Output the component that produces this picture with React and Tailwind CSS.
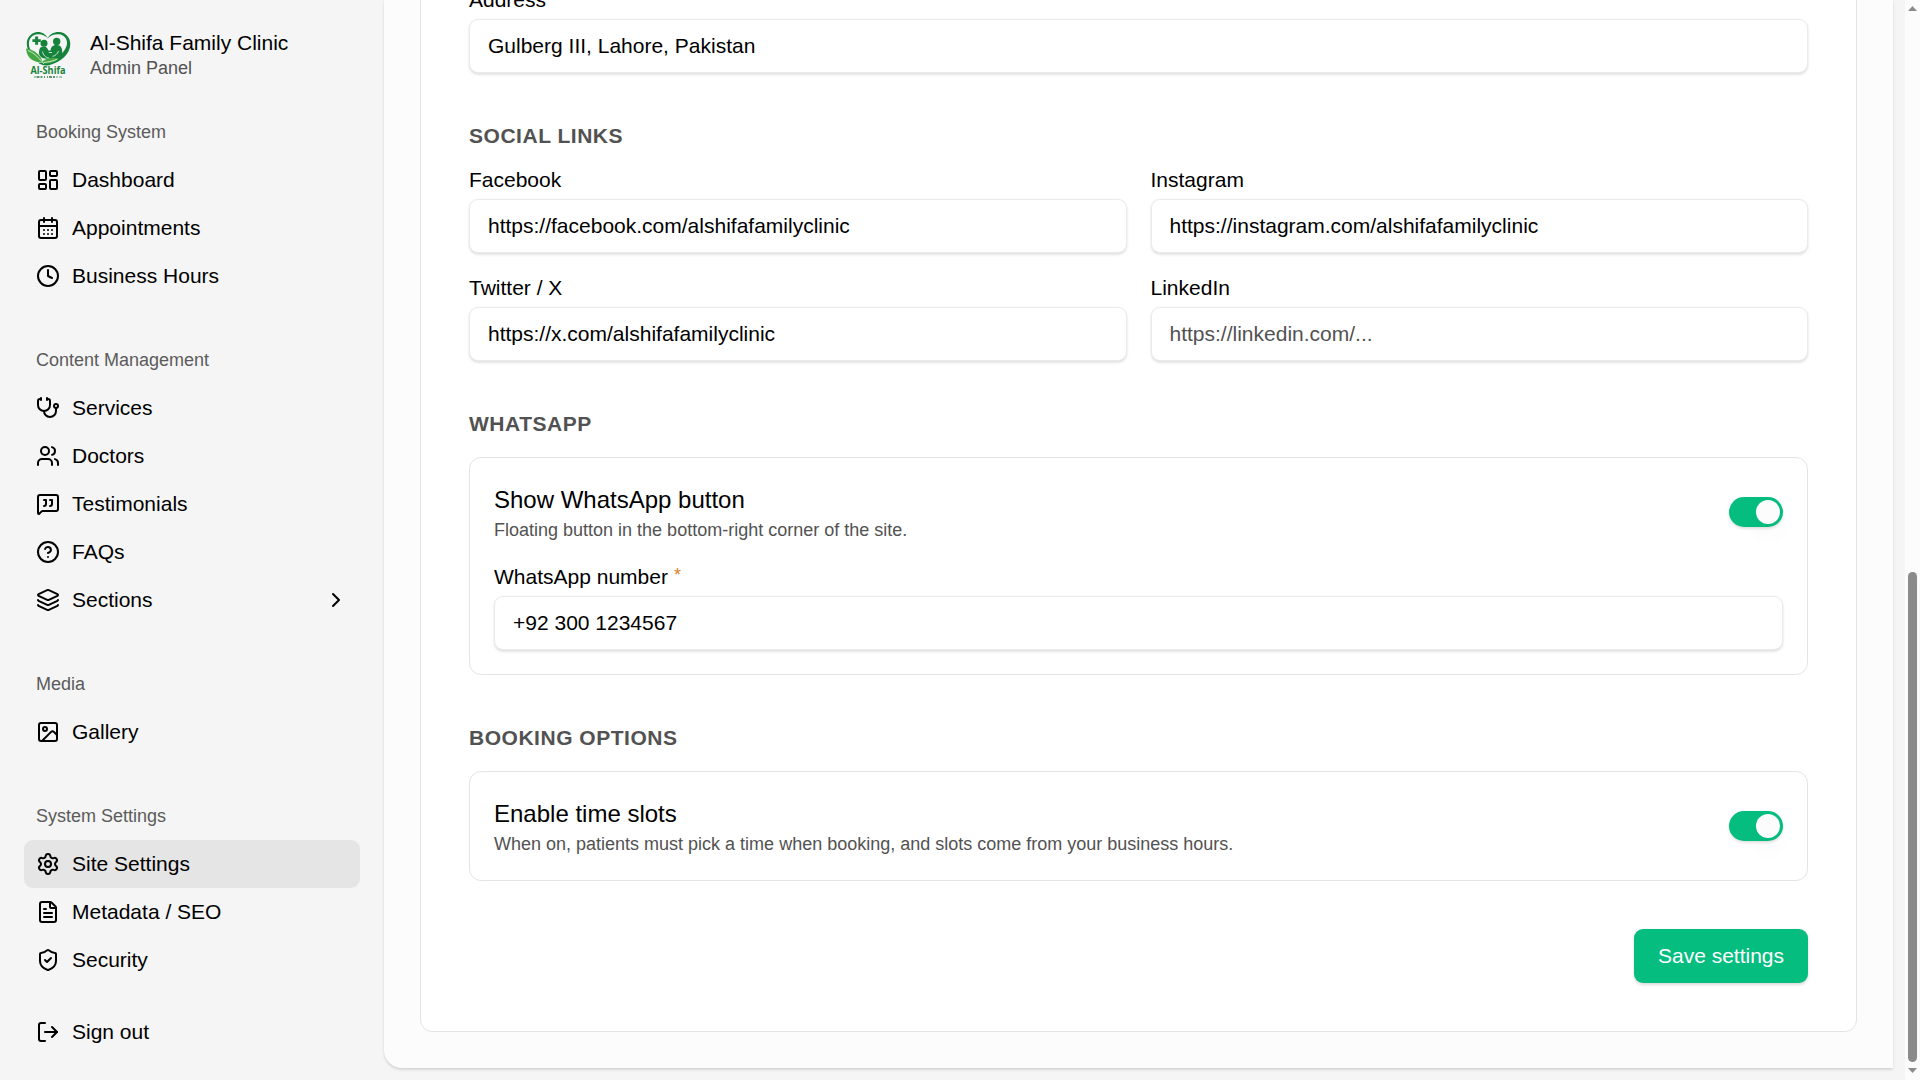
import {
  LayoutDashboard, CalendarDays, Clock, Stethoscope, Users, MessageSquareQuote,
  CircleHelp, Layers, ChevronRight, Image, Settings, FileText, ShieldCheck, LogOut,
} from 'lucide-react';

const groups = [
  { label: 'Booking System', items: [
    { icon: LayoutDashboard, text: 'Dashboard' },
    { icon: CalendarDays, text: 'Appointments' },
    { icon: Clock, text: 'Business Hours' },
  ] },
  { label: 'Content Management', items: [
    { icon: Stethoscope, text: 'Services' },
    { icon: Users, text: 'Doctors' },
    { icon: MessageSquareQuote, text: 'Testimonials' },
    { icon: CircleHelp, text: 'FAQs' },
    { icon: Layers, text: 'Sections', expandable: true },
  ] },
  { label: 'Media', items: [{ icon: Image, text: 'Gallery' }] },
  { label: 'System Settings', items: [
    { icon: Settings, text: 'Site Settings', active: true },
    { icon: FileText, text: 'Metadata / SEO' },
    { icon: ShieldCheck, text: 'Security' },
  ] },
];

function Logo() {
  return (
    <svg className="mb-px size-12 shrink-0" viewBox="0 0 48 48">
      <path d="M24 8.500C21 3 16.500 1.800 13 2.100C7 2.800 2.800 8 2.800 13.500C2.800 17 4 20 5.500 22L8 22.500C5.600 19 4.700 16 4.900 13C5.300 8 9 4.600 13.500 4.300C18 4 21.500 5.700 24 8.500Z" fill="#15833b" />
      <path d="M23.500 8.500C26 4 30 1.900 35 2.100C41.500 2.500 46.300 7.500 46.300 14C46.300 24 37 32 25 35.200C20 36 16 34.500 14 32.500C24 34 41 26 43 14C43.600 8.500 39.500 4.500 35 4.200C30 3.900 26.500 5.300 23.500 8.500Z" fill="#15833b" />
      <path d="M11.100 6.500h3v2.700h2.700v2.800h-2.700v2.700h-3v-2.700H8.400V9.200h2.700Z" fill="#15833b" />
      <circle cx="20" cy="13.300" r="3.500" fill="#15833b" />
      <circle cx="32.700" cy="11.500" r="3.700" fill="#15833b" />
      <path d="M15 23.500C15 18.500 16.300 16.600 20 16.600C22.300 16.700 23.700 18.500 24.400 20.500L26.500 20.500C27 16.500 29 15 32.700 15C37 15.100 38.400 18 38.300 23C38 26.500 35 28.800 31 28.800L22 28.800C18 28.500 15.500 26.500 15 23.500Z" fill="#15833b" />
      <path d="M18.500 21.500C19 25 22 28 25 28M34.500 21C33.500 24 31 26 28.500 26.300M24.800 22.500L28 22.500" fill="none" stroke="#f5f5f5" strokeWidth="0.8" />
      <path d="M2 18.500C10 19.500 16.500 24.500 19 32.500C11 32.500 3 30 2 18.500Z" fill="#45a744" />
      <path d="M18 32.500C21 28 27 27.500 35 28.500C31 32.500 24 35 18 32.500Z" fill="#45a744" />
      <path d="M4 20.500C9 22.500 14 26.500 20 34M20 32.500C25 32 29 31 33 29.300" fill="none" stroke="#eef7ee" strokeWidth="0.8" />
      <text x="6.500" y="44.300" textLength="35" lengthAdjust="spacingAndGlyphs" fill="#15833b" fontFamily="Open Sans, sans-serif" fontSize="9.800" fontWeight="700">Al-Shifa</text>
      <path d="M10.500 47H38" stroke="#2d7c46" strokeWidth="1.300" strokeDasharray="1 1 3 1 2 1.500 1 2" />
    </svg>
  );
}

function NavItem({ icon: Icon, text, active, expandable }) {
  return (
    <a className={`flex h-12 items-center gap-3 rounded-[9px] px-3 text-[21px] leading-[30px] text-black ${active ? 'bg-[#e5e5e5]' : ''}`}>
      <Icon className="size-6 shrink-0" />
      <span className="grow">{text}</span>
      {expandable && <ChevronRight className="size-6" />}
    </a>
  );
}

function Field({ label, value, placeholder, required }) {
  return (
    <div className="flex min-w-0 flex-col gap-[9px]">
      <label className="flex h-[21px] items-center gap-1.5 text-[21px] leading-[21px] whitespace-nowrap">
        {label}
        {required && <span className="pb-1 text-lg leading-[18px] text-[#d9822b]">*</span>}
      </label>
      <input
        readOnly
        value={value}
        placeholder={placeholder}
        className="h-[54px] w-full rounded-[9px] border border-[#ebebeb] bg-white px-[18px] text-[21px] shadow-[0_1.5px_3px_rgba(0,0,0,0.09),0_1.5px_3px_-1.5px_rgba(0,0,0,0.09)] outline-none placeholder:text-[#525252]"
      />
    </div>
  );
}

function Section({ title, children }) {
  return (
    <section className="flex flex-col gap-[19px]">
      <h3 className="text-[21px] leading-[29px] font-bold tracking-[0.025em] text-[#525252] uppercase">{title}</h3>
      {children}
    </section>
  );
}

function ToggleRow({ title, description }) {
  return (
    <div className="flex items-center justify-between">
      <div>
        <p className="text-2xl leading-9">{title}</p>
        <p className="text-lg leading-6 text-[#525252]">{description}</p>
      </div>
      <button className="flex h-[30px] w-[54px] items-center justify-end rounded-full bg-[#04bd7f] p-[3px] shadow-[0_1.5px_3px_rgba(0,0,0,0.14)]">
        <span className="size-6 rounded-full bg-[#fcfcfc] shadow-[0_15px_22px_-4px_rgba(0,0,0,0.06)]" />
      </button>
    </div>
  );
}

export default function App() {
  return (
    <div className="flex h-screen w-full overflow-hidden bg-[#f5f5f5] font-['Liberation_Sans',Arial,sans-serif] text-black">
      <aside className="flex w-96 shrink-0 flex-col px-6 pt-[29px] pb-6">
        <div className="flex h-[51px] items-center gap-[18px]">
          <Logo />
          <div>
            <p className="text-[21px] leading-[26px]">Al-Shifa Family Clinic</p>
            <p className="text-lg leading-6 text-[#525252]">Admin Panel</p>
          </div>
        </div>
        <nav className="mt-7 flex grow flex-col gap-9">
          {groups.map((g) => (
            <div key={g.label}>
              <p className="flex h-12 items-center px-3 text-lg text-[#5b5b5b]">{g.label}</p>
              {g.items.map((item) => <NavItem key={item.text} {...item} />)}
            </div>
          ))}
        </nav>
        <NavItem icon={LogOut} text="Sign out" />
      </aside>

      <main className="mb-3 flex min-w-0 grow flex-col justify-end rounded-bl-[18px] bg-[#fcfcfc] px-9 pb-9 shadow-[0_1.5px_3px_rgba(0,0,0,0.1),0_1.5px_3px_-1.5px_rgba(0,0,0,0.1)]">
        <div className="flex shrink-0 flex-col gap-12 rounded-xl border border-[#e4e4e4] bg-white p-12">
          <Field label="Address" value="Gulberg III, Lahore, Pakistan" />
          <Section title="Social links">
            <div className="grid grid-cols-2 gap-6">
              <Field label="Facebook" value="https://facebook.com/alshifafamilyclinic" />
              <Field label="Instagram" value="https://instagram.com/alshifafamilyclinic" />
              <Field label="Twitter / X" value="https://x.com/alshifafamilyclinic" />
              <Field label="LinkedIn" value="" placeholder="https://linkedin.com/..." />
            </div>
          </Section>
          <Section title="WhatsApp">
            <div className="flex flex-col gap-6 rounded-xl border border-[#e4e4e4] p-6">
              <ToggleRow title="Show WhatsApp button" description="Floating button in the bottom-right corner of the site." />
              <Field label="WhatsApp number" value="+92 300 1234567" required />
            </div>
          </Section>
          <Section title="Booking options">
            <div className="rounded-xl border border-[#e4e4e4] p-6">
              <ToggleRow
                title="Enable time slots"
                description="When on, patients must pick a time when booking, and slots come from your business hours."
              />
            </div>
          </Section>
          <button className="h-[54px] w-[174px] self-end rounded-[9px] bg-[#04bd7f] text-[21px] text-white shadow-[0_1.5px_3px_rgba(0,0,0,0.14)]">
            Save settings
          </button>
        </div>
      </main>

      <div className="ml-3 flex w-[15px] shrink-0 flex-col items-center justify-between bg-[#fcfcfc] pt-1.5 pb-[7px]">
        <svg className="h-[5px] w-[9px]" viewBox="0 0 9 5"><path d="M4.500 0L9 5H0Z" fill="#8b8b8b" /></svg>
        <div className="flex flex-col items-center gap-1.5">
          <div className="h-[490px] w-[9px] rounded-full bg-[#8b8b8b]" />
          <svg className="h-[5px] w-[9px]" viewBox="0 0 9 5"><path d="M0 0H9L4.500 5Z" fill="#8b8b8b" /></svg>
        </div>
      </div>
    </div>
  );
}
